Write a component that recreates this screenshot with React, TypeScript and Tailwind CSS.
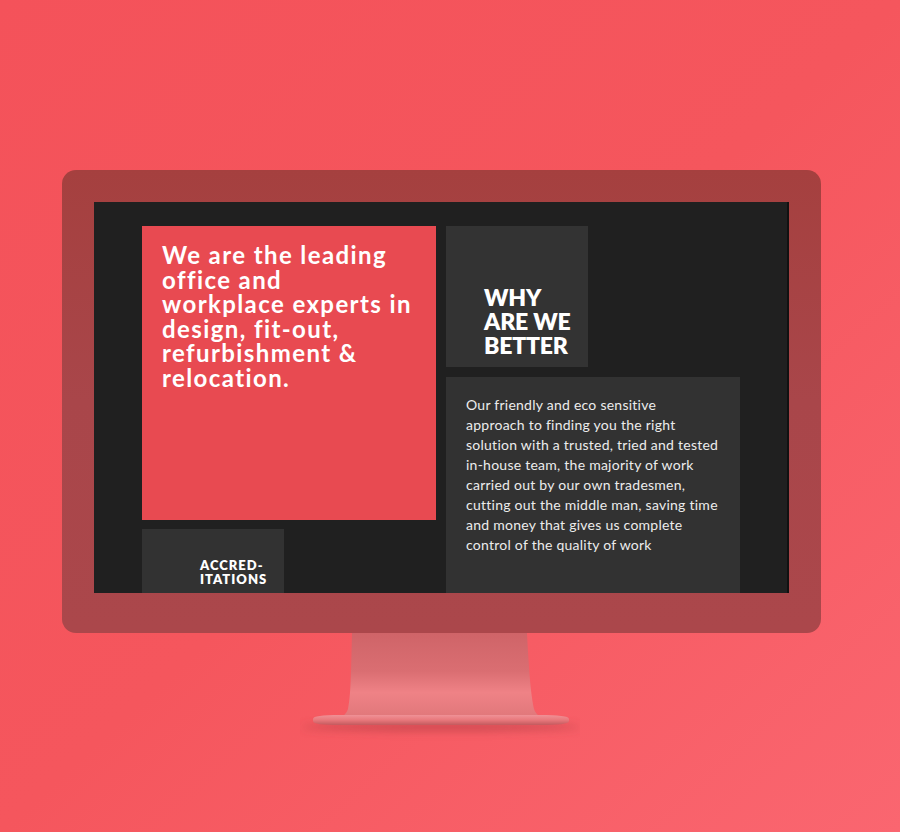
import type { ReactNode } from "react";

const font = { fontFamily: "Lato, 'Open Sans', Arial, sans-serif" };

const Box = ({ className, children }: { className: string; children?: ReactNode }) => (
    <div className={className}>{children}</div>
);

const Stand = () => (
    <svg width="280" height="110" viewBox="0 0 280 110" className="block">
        <defs>
            <linearGradient id="neck" x1="0" y1="0" x2="0" y2="1">
                <stop offset="0" stopColor="#cf6468" />
                <stop offset="0.45" stopColor="#da6e72" />
                <stop offset="0.7" stopColor="#ef8286" />
                <stop offset="1" stopColor="#e0777a" />
            </linearGradient>
            <linearGradient id="foot" x1="0" y1="0" x2="0" y2="1">
                <stop offset="0" stopColor="#f09196" />
                <stop offset="0.5" stopColor="#e8787c" />
                <stop offset="1" stopColor="#c35a5e" />
            </linearGradient>
            <filter id="blur" x="-20%" y="-200%" width="140%" height="500%">
                <feGaussianBlur stdDeviation="4" />
            </filter>
        </defs>
        <ellipse cx="141" cy="94" rx="140" ry="4" fill="#a3383c" opacity="0.5" filter="url(#blur)" />
        <path
            d="M52 0 L227 0 C229 40 231 62 234 76 C236 82 240 84 246 85 L36 85 C42 84 46 82 48 76 C51 62 51 40 52 0 Z"
            fill="url(#neck)"
        />
        <path
            d="M13 86 C13 83 22 82 40 82 L240 82 C258 82 269 83 269 86 L269 88 C269 91 258 92 240 92 L40 92 C22 92 13 91 13 88 Z"
            fill="url(#foot)"
        />
    </svg>
);

const App = () => {
    return (
        <div
            className="w-[900px] h-[832px] overflow-hidden bg-gradient-to-br from-[#f4525a] via-[#f5565d] to-[#fa6670] flex flex-col pl-[62px] pt-[170px]"
            style={font}
        >
            <div className="w-[759px] h-[463px] rounded-[14px] bg-gradient-to-b from-[#a5403f] via-[#a9464a] to-[#ab474b] pt-[32px] px-[32px]">
                <div className="w-[695px] h-[391px] bg-[#202020] border-r-[2px] border-[#111] overflow-hidden flex gap-[10px] pl-[48px] pt-[24px]">
                    <div className="flex flex-col gap-[9px] w-[294px] shrink-0">
                        <Box className="w-[294px] h-[294px] shrink-0 bg-[#e84a51] pl-[20px] pt-[17px]">
                            <p className="text-white font-bold text-[24px] leading-[24.6px] tracking-[1.4px]">
                                We are the leading<br />
                                office and<br />
                                workplace experts in<br />
                                design, fit-out,<br />
                                refurbishment &amp;<br />
                                relocation.
                            </p>
                        </Box>
                        <Box className="w-[142px] h-[100px] shrink-0 bg-[#323232] pl-[58px] pt-[29px]">
                            <p className="text-white font-extrabold text-[13px] leading-[14px] tracking-[1px]">
                                ACCRED-<br />
                                ITATIONS
                            </p>
                        </Box>
                    </div>
                    <div className="flex flex-col gap-[10px] w-[294px] shrink-0">
                        <Box className="w-[142px] h-[141px] shrink-0 bg-[#333333] pl-[38px] pt-[59px]">
                            <p className="text-white font-extrabold text-[23px] leading-[24px] tracking-[-0.2px]">
                                WHY<br />
                                ARE WE<br />
                                BETTER
                            </p>
                        </Box>
                        <Box className="w-[294px] h-[230px] shrink-0 bg-[#323232] pl-[20px] pt-[18px]">
                            <p className="text-[#ececec] text-[14px] leading-[20px] tracking-[0.25px]">
                                Our friendly and eco sensitive<br />
                                approach to finding you the right<br />
                                solution with a trusted, tried and tested<br />
                                in-house team, the majority of work<br />
                                carried out by our own tradesmen,<br />
                                cutting out the middle man, saving time<br />
                                and money that gives us complete<br />
                                control of the quality of work
                            </p>
                        </Box>
                    </div>
                </div>
            </div>
            <div className="w-[759px] flex justify-center">
                <div className="ml-[-4px]">
                    <Stand />
                </div>
            </div>
        </div>
    );
};

export default App;
